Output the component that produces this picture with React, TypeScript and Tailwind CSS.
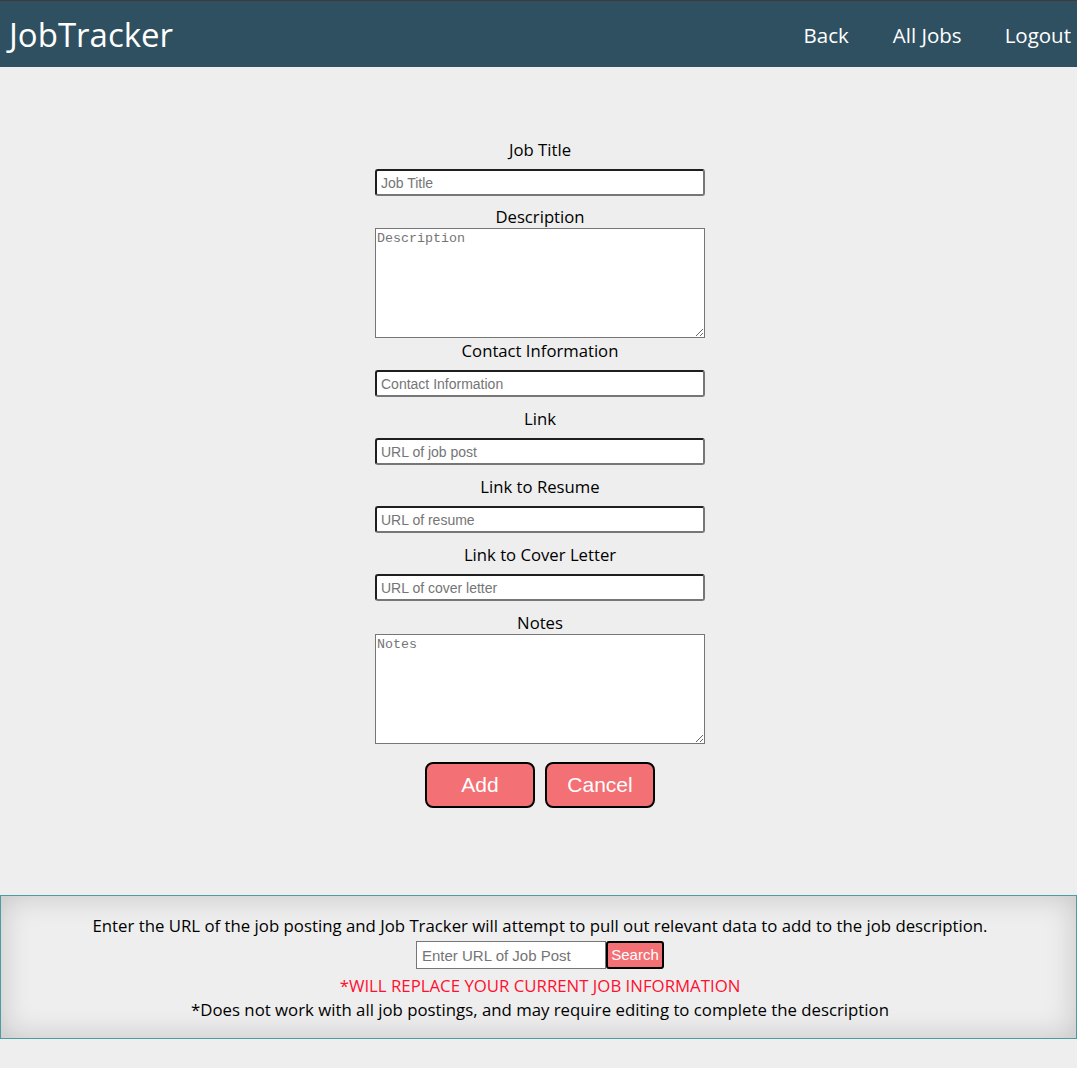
import React, { useState } from "react";

const font = { fontFamily: '"Open Sans", "Noto Sans", sans-serif' };

const inputCls =
  "w-[330px] h-[27px] bg-white rounded-[3px] border-2 border-t-[#1f1f1f] border-l-[#1f1f1f] border-r-[#767676] border-b-[#767676] px-[4px] text-[14px] text-black placeholder:text-[#757575] outline-none [font-family:'Liberation_Sans',Arial,sans-serif]";

const areaCls =
  "w-[330px] h-[110px] bg-white border border-[#767676] px-[1px] py-0 text-[13.33px] text-black placeholder:text-[#757575] outline-none [font-family:'Liberation_Mono',monospace] block";

const btnCls =
  "w-[110px] h-[46px] bg-[#f37075] border-2 border-black rounded-[8px] text-white text-[21px] [font-family:'Liberation_Sans',Arial,sans-serif]";

const Label: React.FC<{ text: string; className?: string }> = ({ text, className }) => (
  <label className={"block text-[16.7px] leading-[22px] text-black " + (className || "")}>{text}</label>
);

export default function App() {
  const [form, setForm] = useState({
    title: "",
    description: "",
    contact: "",
    link: "",
    resume: "",
    cover: "",
    notes: "",
  });
  const [url, setUrl] = useState("");

  const set = (k: keyof typeof form) => (e: React.ChangeEvent<HTMLInputElement | HTMLTextAreaElement>) =>
    setForm({ ...form, [k]: e.target.value });

  return (
    <div className="min-h-[1068px] bg-[#eeeeee] text-black" style={font}>
      {/* NAVBAR */}
      <nav className="h-[67px] bg-[#2f5061] border-t border-[#3c3c3c] flex items-center justify-between pl-[9px] pr-[6px]">
        <h1 className="text-[33px] text-white leading-none mt-[1px]">JobTracker</h1>
        <div className="flex items-center text-[20.5px] text-white mt-[3px]">
          <a href="#">Back</a>
          <a href="#" className="ml-[44px]">All Jobs</a>
          <a href="#" className="ml-[43px]">Logout</a>
        </div>
      </nav>

      {/* FORM */}
      <form className="flex flex-col items-center pt-[72px] pl-[3px]" onSubmit={(e) => e.preventDefault()}>
        <Label text="Job Title" />
        <input className={inputCls + " mt-[8px]"} placeholder="Job Title" value={form.title} onChange={set("title")} />
        <Label text="Description" className="mt-[10px]" />
        <textarea className={areaCls} placeholder="Description" value={form.description} onChange={set("description")} />
        <Label text="Contact Information" className="mt-[2px]" />
        <input className={inputCls + " mt-[8px]"} placeholder="Contact Information" value={form.contact} onChange={set("contact")} />
        <Label text="Link" className="mt-[11px]" />
        <input className={inputCls + " mt-[8px]"} placeholder="URL of job post" value={form.link} onChange={set("link")} />
        <Label text="Link to Resume" className="mt-[11px]" />
        <input className={inputCls + " mt-[8px]"} placeholder="URL of resume" value={form.resume} onChange={set("resume")} />
        <Label text="Link to Cover Letter" className="mt-[11px]" />
        <input className={inputCls + " mt-[8px]"} placeholder="URL of cover letter" value={form.cover} onChange={set("cover")} />
        <Label text="Notes" className="mt-[11px]" />
        <textarea className={areaCls} placeholder="Notes" value={form.notes} onChange={set("notes")} />

        <div className="flex gap-[10px] mt-[18px]">
          <button type="submit" className={btnCls}>
            Add
          </button>
          <button type="button" className={btnCls}>
            Cancel
          </button>
        </div>
      </form>

      {/* URL SCRAPER */}
      <div className="mt-[87px] h-[144px] border border-[#4b9ca3] bg-[#eeeeee] shadow-[inset_0_0_30px_rgba(0,0,0,0.18)] flex flex-col items-center pt-[19px] pl-[3px]">
        <p className="text-[16.8px] leading-[22px]">
          Enter the URL of the job posting and Job Tracker will attempt to pull out relevant data to add to the job description.
        </p>
        <div className="flex mt-[4px]">
          <input
            className="w-[190px] h-[28px] bg-white border border-[#767676] px-[5px] text-[15px] placeholder:text-[#757575] outline-none [font-family:'Liberation_Sans',Arial,sans-serif]"
            placeholder="Enter URL of Job Post"
            value={url}
            onChange={(e) => setUrl(e.target.value)}
          />
          <button className="w-[58px] h-[28px] bg-[#f37075] border-2 border-black rounded-[3px] text-white text-[15px] [font-family:'Liberation_Sans',Arial,sans-serif]">
            Search
          </button>
        </div>
        <p className="text-[16.8px] leading-[22px] text-[#ff1030] mt-[6px]">*WILL REPLACE YOUR CURRENT JOB INFORMATION</p>
        <p className="text-[16.8px] leading-[22px] mt-[2px]">
          *Does not work with all job postings, and may require editing to complete the description
        </p>
      </div>
    </div>
  );
}
